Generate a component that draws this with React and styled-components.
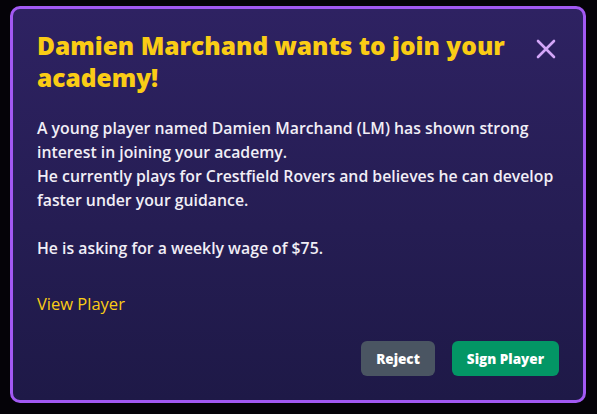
import React from 'react';
import styled, { createGlobalStyle } from 'styled-components';

const GlobalStyle = createGlobalStyle`
  html, body {
    margin: 0;
    padding: 0;
    background: #050308;
  }
  body {
    font-family: "Open Sans", "Noto Sans", sans-serif;
  }
`;

const Page = styled.div`
  width: 597px;
  height: 414px;
  padding: 6px 11px 11px 10px;
  box-sizing: border-box;
  display: flex;
`;

const Modal = styled.div`
  flex: 1;
  box-sizing: border-box;
  border: 3px solid #a259f3;
  border-radius: 10px;
  background: linear-gradient(to bottom, #2e2262, #1e1947);
  padding: 21px 24px 24px 24px;
  display: flex;
  flex-direction: column;
`;

const Header = styled.div`
  display: flex;
  justify-content: space-between;
  align-items: flex-start;
  gap: 12px;
`;

const Title = styled.h2`
  margin: 0;
  color: #facc15;
  font-size: 24.5px;
  line-height: 32px;
  font-weight: 800;
  max-width: 500px;
`;

const CloseButton = styled.button`
  border: none;
  background: none;
  padding: 0;
  margin-top: 8px;
  margin-right: 2px;
  color: #d3a6f8;
  cursor: pointer;
  display: flex;
`;

const Body = styled.div`
  margin-top: 22px;
  color: #f1eef6;
  font-size: 15.8px;
  line-height: 24px;
  font-weight: 600;
`;

const Paragraph = styled.p`
  margin: 0 0 24px 0;
  &:last-child {
    margin-bottom: 0;
  }
`;

const Link = styled.a`
  margin-top: 32px;
  color: #facc15;
  font-size: 16.5px;
  line-height: 24px;
  font-weight: 500;
  text-decoration: none;
  align-self: flex-start;
  cursor: pointer;
`;

const Footer = styled.div`
  margin-top: auto;
  display: flex;
  justify-content: flex-end;
  gap: 17px;
`;

const Button = styled.button`
  height: 35px;
  padding: 0 15px;
  border: none;
  border-radius: 6px;
  background: ${(p) => (p.$primary ? '#039665' : '#4a5562')};
  color: #ffffff;
  font-family: inherit;
  font-size: 13.5px;
  font-weight: 800;
  cursor: pointer;
`;

const App = () => (
  <Page>
    <GlobalStyle />
    <Modal>
      <Header>
        <Title>Damien Marchand wants to join your academy!</Title>
        <CloseButton aria-label="Close">
          <svg width="22" height="22" viewBox="0 0 22 22" fill="none">
            <path d="M3 3 L19 19 M19 3 L3 19" stroke="currentColor" strokeWidth="2.6" strokeLinecap="round" />
          </svg>
        </CloseButton>
      </Header>
      <Body>
        <Paragraph>
          A young player named Damien Marchand (LM) has shown strong interest in joining your academy.
          <br />
          He currently plays for Crestfield Rovers and believes he can develop faster under your guidance.
        </Paragraph>
        <Paragraph>He is asking for a weekly wage of $75.</Paragraph>
      </Body>
      <Link>View Player</Link>
      <Footer>
        <Button>Reject</Button>
        <Button $primary>Sign Player</Button>
      </Footer>
    </Modal>
  </Page>
);

export default App;
